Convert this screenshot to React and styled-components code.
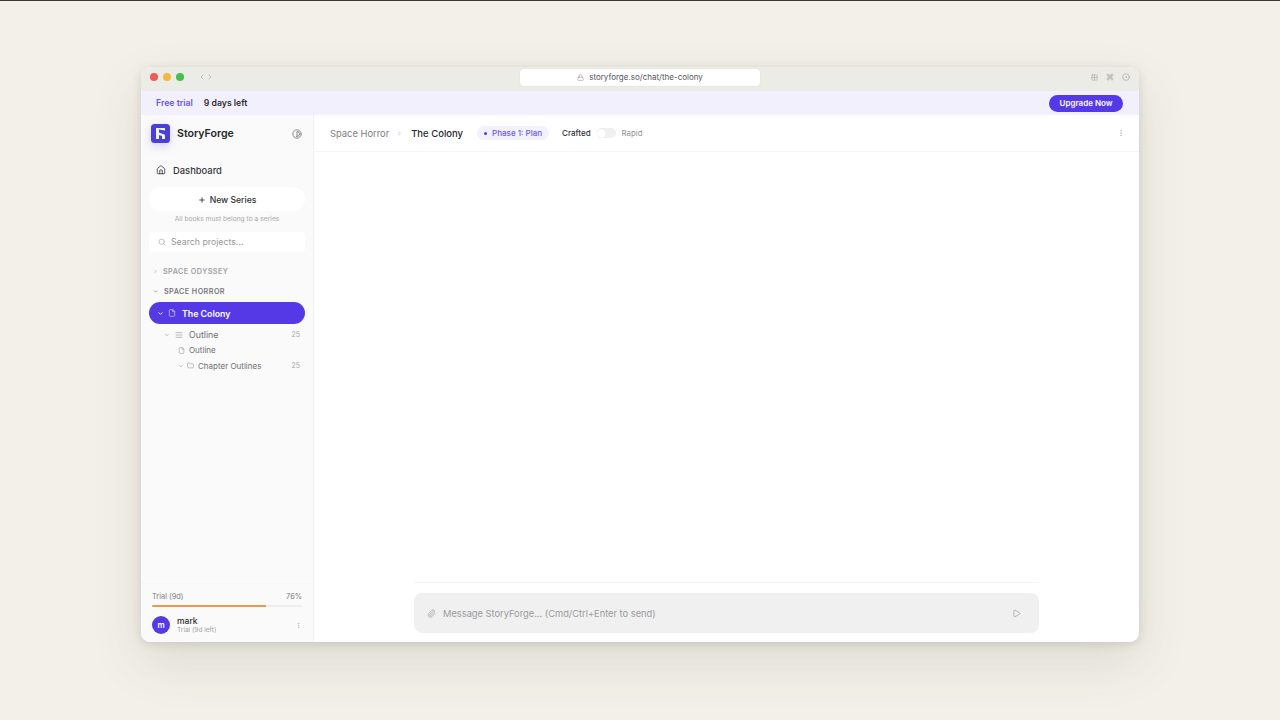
import React from "react";
import styled, { createGlobalStyle } from "styled-components";
import { House, Search, ChevronRight, ChevronDown, ChevronLeft, File, AlignJustify, Folder, Lock, Paperclip, Play, EllipsisVertical, Contrast, Grid2x2, Command, CircleDot, Plus } from "lucide-react";

const Global = createGlobalStyle`
  html, body { margin: 0; padding: 0; height: 720px; overflow: hidden; background: #f3f0e9; }
  body { font-family: Inter, "Liberation Sans", sans-serif; color: #1c1c22; -webkit-font-smoothing: antialiased; }
  * { box-sizing: border-box; }
`;

const Stage = styled.div`
  height: 720px;
  padding: 67px 141px 0;
  border-top: 1px solid #3a3a38;
`;
const Win = styled.div`
  width: 998px;
  height: 575px;
  margin-top: -1px;
  border-radius: 9px;
  overflow: hidden;
  background: #fff;
  display: flex;
  flex-direction: column;
  box-shadow: 0 20px 50px rgba(80, 76, 55, 0.13), 0 2px 10px rgba(80, 76, 55, 0.16);
`;
const TitleBar = styled.div`
  height: 24px;
  flex: none;
  background: #ecece7;
  display: grid;
  grid-template-columns: 1fr 240px 1fr;
  align-items: center;
  padding: 0 9px 4px 9px;
`;
const TitleLeft = styled.div`display: flex; align-items: center;`;
const Dot = styled.span`
  width: 8px; height: 8px; border-radius: 50%;
  background: ${p => p.$c};
  margin-right: 5px;
`;
const NavArrows = styled.div`
  display: flex; margin-left: 9px; color: #a9a9a5;
`;
const Address = styled.div`
  height: 17px;
  background: #fff;
  border-radius: 4px;
  display: flex; align-items: center; justify-content: center; gap: 5px;
  font-size: 8px;
  color: #55555a;
  box-shadow: 0 0 1px rgba(0,0,0,.15);
`;
const TitleRight = styled.div`
  display: flex; justify-content: flex-end; align-items: center; gap: 8px; color: #a6a6a2;
`;
const TrialBar = styled.div`
  height: 24px; flex: none;
  background: #f3f0fd;
  display: flex; align-items: center;
  padding: 0 16px 0 15px;
  font-size: 8.7px; font-weight: 600;
`;
const FreeTrial = styled.span`color: #6a57e2; margin-right: 11px;`;
const DaysLeft = styled.span`color: #2d2d32; flex: 1;`;
const Upgrade = styled.button`
  height: 17px; width: 74px; border: 0; border-radius: 9px; padding: 0;
  background: #5539e6; color: #fff;
  font: 600 8px Inter, sans-serif;
`;
const Body = styled.div`flex: 1; display: flex; min-height: 0;`;
const Sidebar = styled.aside`
  width: 173px; flex: none;
  background: #fafafa;
  border-right: 1px solid #f1f1f1;
  display: flex; flex-direction: column;
  padding: 0 8px;
`;
const Brand = styled.div`
  height: 37px; flex: none;
  display: flex; align-items: center;
  padding: 0 2px;
`;
const BrandName = styled.span`
  font-size: 10.6px; font-weight: 600; margin-left: 7px; flex: 1; color: #26262b;
`;
const ThemeBtn = styled.span`display: flex; color: #77777a; margin-right: 1px;`;
const DashRow = styled.div`
  height: 22px; margin-top: 7px;
  display: flex; align-items: center; gap: 7px;
  padding-left: 7px;
  font-size: 9.4px; font-weight: 500; color: #35353a;
`;
const NewSeries = styled.div`
  height: 24px; margin-top: 6px; padding-top: 1px;
  background: #fff; border-radius: 12px;
  display: flex; align-items: center; justify-content: center; gap: 4px;
  font-size: 8.6px; font-weight: 500; color: #2f2f34;
`;
const Hint = styled.div`
  margin-top: 3px; text-align: center; font-size: 6.7px; line-height: 10px; color: #a8a8ac;
`;
const SearchBox = styled.div`
  height: 20px; margin-top: 8px;
  background: #fff; border-radius: 4px;
  display: flex; align-items: center; gap: 5px; padding-left: 9px;
  font-size: 8.75px; color: #97979b;
`;
const Group = styled.div`
  height: 12px;
  margin-top: ${p => p.$mt}px;
  padding-left: ${p => p.$pl}px;
  display: flex; align-items: center; gap: ${p => p.$gap}px;
  font-size: 7.2px; font-weight: 600; letter-spacing: .45px;
  color: ${p => p.$c};
`;
const Active = styled.div`
  height: 22px; margin-top: 5px;
  background: #5539e6; border-radius: 11px; color: #fff;
  display: flex; align-items: center; padding-left: 8px;
  font-size: 8.8px; font-weight: 600;
`;
const ActiveIcon = styled.span`display: flex; margin: 0 6px 0 4px; color: #d9d3fb;`;
const TreeRow = styled.div`
  height: ${p => p.$h}px;
  margin-top: ${p => p.$mt || 0}px;
  padding-left: ${p => p.$pl}px;
  padding-right: 5px;
  display: flex; align-items: center;
  font-size: ${p => p.$fs}px; color: #6e6e73;
`;
const TreeIcon = styled.span`display: flex; margin-right: ${p => p.$mr}px; color: #9a9a9e;`;
const Count = styled.span`margin-left: auto; font-size: 7px; color: #a6a6aa;`;
const Spacer = styled.div`flex: 1;`;
const Usage = styled.div`
  height: 59px; flex: none;
  margin: 0 -8px;
  padding: 0 11px;
  border-top: 1px solid #f6f6f6;
`;
const UsageLine = styled.div`
  display: flex; justify-content: space-between;
  font-size: 7.4px; line-height: 10px; color: #7c7c81;
  margin-top: 8px;
`;
const Track = styled.div`
  height: 2px; margin-top: 3px; background: #eeeeee; border-radius: 1px; overflow: hidden;
`;
const Fill = styled.div`height: 100%; background: #ef9a4a;`;
const UserRow = styled.div`
  display: flex; align-items: center; margin-top: 9px;
`;
const Avatar = styled.div`
  width: 18px; height: 18px; border-radius: 50%;
  background: #5539e6; color: #fff;
  display: flex; align-items: center; justify-content: center;
  font-size: 8px; font-weight: 600;
`;
const UserText = styled.div`margin-left: 7px; flex: 1;`;
const UserName = styled.div`font-size: 8.5px; line-height: 10px; font-weight: 500; color: #2a2a2f;`;
const UserPlan = styled.div`font-size: 6.5px; line-height: 8px; color: #a2a2a6;`;
const Main = styled.main`flex: 1; display: flex; flex-direction: column; min-width: 0;`;
const Header = styled.header`
  height: 37px; flex: none;
  border-bottom: 1px solid #f6f6f6;
  display: flex; align-items: center;
  padding: 0 14px 0 16px;
`;
const Crumb = styled.span`font-size: 9.35px; color: #7c7c81;`;
const CrumbCurrent = styled.span`font-size: 9.5px; font-weight: 500; color: #2a2a2f;`;
const Sep = styled.span`display: flex; margin: 0 8px 0 7px; color: #a8a8ac;`;
const Phase = styled.span`
  height: 14px; margin-left: 14px; padding: 0 7px;
  background: #f3f1fd; border-radius: 7px;
  display: flex; align-items: center; gap: 5px;
  font-size: 8px; font-weight: 500; color: #6a57e2;
`;
const PhaseDot = styled.i`width: 3px; height: 3px; border-radius: 50%; background: #5539e6;`;
const ModeOn = styled.span`margin-left: 13px; font-size: 8px; font-weight: 500; color: #2f2f34;`;
const Toggle = styled.span`
  width: 19px; height: 10px; margin: 0 6px; border-radius: 5px;
  background: #f0f0f0; display: flex; align-items: center;
`;
const Knob = styled.i`width: 9px; height: 9px; border-radius: 50%; background: #fff; box-shadow: 0 0 1px rgba(0,0,0,.15);`;
const ModeOff = styled.span`font-size: 7.8px; color: #8f8f94;`;
const HeadMenu = styled.span`margin-left: auto; display: flex; color: #b4b4b8;`;
const Content = styled.div`flex: 1;`;
const Composer = styled.div`
  height: 60px; flex: none;
  margin: 0 100px;
  border-top: 1px solid #f6f6f6;
  padding-top: 10px;
`;
const InputBox = styled.div`
  height: 40px; background: #f0f0f0; border-radius: 8px;
  display: flex; align-items: center; gap: 7px;
  padding: 0 18px 0 13px;
  font-size: 9.3px; color: #9a9a9e;
`;
const SendIcon = styled.span`margin-left: auto; display: flex; color: #a0a0a4;`;

const LogoBox = styled.svg`
  display: block; flex: none;
  filter: drop-shadow(0 3px 5px rgba(67, 56, 216, 0.22));
`;
const Logo = () => (
  <LogoBox width="19" height="19" viewBox="0 0 19 19">
    <rect width="19" height="19" rx="3.5" fill="#4a3fd6" />
    <path d="M5 4h9v2.6L8 5.6v3l6 2.2V15h-3v-3L8 11v4H5z" fill="#eef0fb" />
  </LogoBox>
);

export default function App() {
  return (
    <>
      <Global />
      <Stage>
        <Win>
          <TitleBar>
            <TitleLeft>
              <Dot $c="#ee5d55" /><Dot $c="#f5b83d" /><Dot $c="#45c04e" />
              <NavArrows><ChevronLeft size={8} /><ChevronRight size={8} /></NavArrows>
            </TitleLeft>
            <Address><Lock size={7} color="#9a9a9a" />storyforge.so/chat/the-colony</Address>
            <TitleRight><Grid2x2 size={7} /><Command size={8} /><CircleDot size={8} /></TitleRight>
          </TitleBar>
          <TrialBar>
            <FreeTrial>Free trial</FreeTrial>
            <DaysLeft>9 days left</DaysLeft>
            <Upgrade>Upgrade Now</Upgrade>
          </TrialBar>
          <Body>
            <Sidebar>
              <Brand>
                <Logo />
                <BrandName>StoryForge</BrandName>
                <ThemeBtn><Contrast size={10} /></ThemeBtn>
              </Brand>
              <DashRow><House size={10} />Dashboard</DashRow>
              <NewSeries><Plus size={8} strokeWidth={2.4} />New Series</NewSeries>
              <Hint>All books must belong to a series</Hint>
              <SearchBox><Search size={8} color="#a6a6aa" />Search projects...</SearchBox>
              <Group $mt={13} $pl={4} $gap={5} $c="#a0a0a4"><ChevronRight size={5} strokeWidth={3} />SPACE ODYSSEY</Group>
              <Group $mt={8} $pl={4} $gap={6} $c="#77777c"><ChevronDown size={5} strokeWidth={3} />SPACE HORROR</Group>
              <Active>
                <ChevronDown size={7} strokeWidth={3} />
                <ActiveIcon><File size={8} /></ActiveIcon>
                The Colony
              </Active>
              <TreeRow $h={15} $mt={3} $pl={15} $fs={8.8}>
                <TreeIcon $mr={5}><ChevronDown size={6} strokeWidth={2.6} /></TreeIcon>
                <TreeIcon $mr={6}><AlignJustify size={8} /></TreeIcon>
                Outline<Count>25</Count>
              </TreeRow>
              <TreeRow $h={16} $pl={29} $fs={8}>
                <TreeIcon $mr={4}><File size={7} /></TreeIcon>
                Outline
              </TreeRow>
              <TreeRow $h={15} $pl={29} $fs={8}>
                <TreeIcon $mr={3}><ChevronDown size={6} strokeWidth={2.6} /></TreeIcon>
                <TreeIcon $mr={4}><Folder size={7} /></TreeIcon>
                Chapter Outlines<Count>25</Count>
              </TreeRow>
              <Spacer />
              <Usage>
                <UsageLine><span>Trial (9d)</span><span>76%</span></UsageLine>
                <Track><Fill style={{ width: "76%" }} /></Track>
                <UserRow>
                  <Avatar>m</Avatar>
                  <UserText>
                    <UserName>mark</UserName>
                    <UserPlan>Trial (9d left)</UserPlan>
                  </UserText>
                  <HeadMenu><EllipsisVertical size={7} /></HeadMenu>
                </UserRow>
              </Usage>
            </Sidebar>
            <Main>
              <Header>
                <Crumb>Space Horror</Crumb>
                <Sep><ChevronRight size={7} /></Sep>
                <CrumbCurrent>The Colony</CrumbCurrent>
                <Phase><PhaseDot />Phase 1: Plan</Phase>
                <ModeOn>Crafted</ModeOn>
                <Toggle><Knob /></Toggle>
                <ModeOff>Rapid</ModeOff>
                <HeadMenu><EllipsisVertical size={8} /></HeadMenu>
              </Header>
              <Content />
              <Composer>
                <InputBox>
                  <Paperclip size={9} color="#a6a6aa" />
                  Message StoryForge... (Cmd/Ctrl+Enter to send)
                  <SendIcon><Play size={9} /></SendIcon>
                </InputBox>
              </Composer>
            </Main>
          </Body>
        </Win>
      </Stage>
    </>
  );
}
